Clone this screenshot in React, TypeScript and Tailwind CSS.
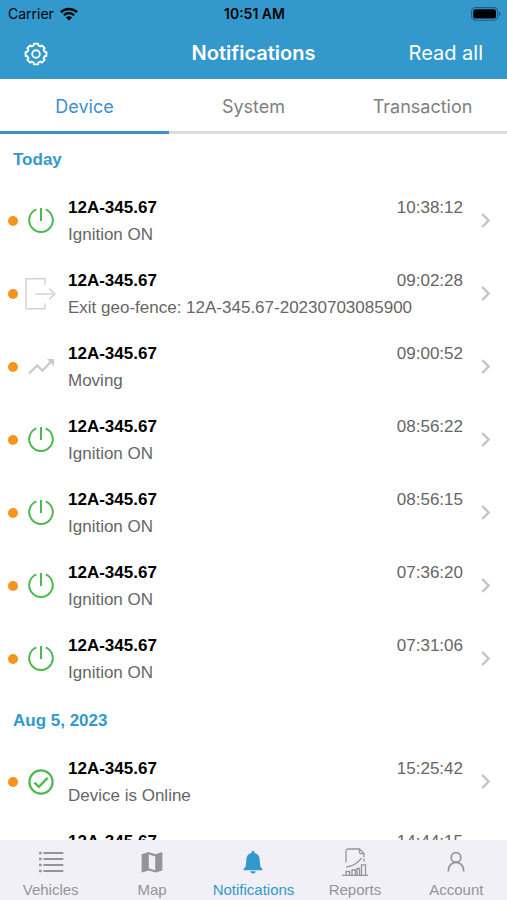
import * as React from "react";

type IconProps = { className?: string };

type NotificationKind = "ignition" | "exit" | "moving" | "online";

type NotificationItem = {
  id: number;
  kind: NotificationKind;
  plate: string;
  message: string;
  time: string;
};

const PLATE = "12A-345.67";

const groups: { label: string; items: NotificationItem[] }[] = [
  {
    label: "Today",
    items: [
      { id: 1, kind: "ignition", plate: PLATE, message: "Ignition ON", time: "10:38:12" },
      {
        id: 2,
        kind: "exit",
        plate: PLATE,
        message: "Exit geo-fence: 12A-345.67-20230703085900",
        time: "09:02:28",
      },
      { id: 3, kind: "moving", plate: PLATE, message: "Moving", time: "09:00:52" },
      { id: 4, kind: "ignition", plate: PLATE, message: "Ignition ON", time: "08:56:22" },
      { id: 5, kind: "ignition", plate: PLATE, message: "Ignition ON", time: "08:56:15" },
      { id: 6, kind: "ignition", plate: PLATE, message: "Ignition ON", time: "07:36:20" },
      { id: 7, kind: "ignition", plate: PLATE, message: "Ignition ON", time: "07:31:06" },
    ],
  },
  {
    label: "Aug 5, 2023",
    items: [
      { id: 8, kind: "online", plate: PLATE, message: "Device is Online", time: "15:25:42" },
      { id: 9, kind: "online", plate: PLATE, message: "Device is Online", time: "14:44:15" },
    ],
  },
];

/* Status bar icons */
const WifiIcon = ({ className }: IconProps) => (
  <svg className={className} viewBox="0 0 18 14" fill="none">
    <path d="M1 5.2a11.4 11.4 0 0 1 16 0" stroke="#000" strokeWidth="2.5" />
    <path d="M3.9 8.2a7.3 7.3 0 0 1 10.2 0" stroke="#000" strokeWidth="2.3" />
    <path d="M9 13.6 5.9 10.5a4.4 4.4 0 0 1 6.2 0z" fill="#000" />
  </svg>
);

const BatteryIcon = ({ className }: IconProps) => (
  <svg className={className} viewBox="0 0 30 14" fill="none">
    <rect x="0.6" y="0.6" width="26" height="12.6" rx="3.8" stroke="#1c5f85" strokeWidth="1.1" />
    <rect x="2.2" y="2.2" width="22.8" height="9.4" rx="2.2" fill="#000" />
    <path d="M28 4.8c1.9.7 1.9 3.5 0 4.2z" fill="#1c5f85" />
  </svg>
);

// Eight wide teeth with shallow notches between them
const GearIcon = ({ className }: IconProps) => (
  <svg
    className={className}
    viewBox="0 0 24 24"
    fill="none"
    stroke="#fff"
    strokeWidth="1.9"
    strokeLinejoin="round"
  >
    <path d="M22.4 14.1 20.500 14.300 19.600 16.400 20.700 17.900 17.900 20.700 16.400 19.600 14.300 20.500 14.100 22.400H9.900L9.700 20.500 7.600 19.600 6.100 20.700 3.300 17.900 4.400 16.400 3.500 14.300 1.600 14.100V9.900L3.500 9.700 4.400 7.600 3.300 6.100 6.100 3.300 7.600 4.400 9.700 3.500 9.900 1.600H14.100L14.300 3.500 16.400 4.400 17.900 3.300 20.700 6.100 19.600 7.600 20.500 9.700 22.400 9.900Z" />
    <circle cx="12" cy="12" r="3.8" />
  </svg>
);

/* Row icons */
const PowerIcon = ({ className }: IconProps) => (
  <svg className={className} viewBox="0 0 32 32" fill="none" stroke="#4db84f" strokeWidth="2">
    <path d="M11.3 4.3a11.8 11.8 0 1 0 9.400 0" />
    <path d="M16 3v13" />
  </svg>
);

const ExitIcon = ({ className }: IconProps) => (
  <svg className={className} viewBox="0 0 32 32" fill="none" stroke="#d2d2d2" strokeWidth="1.4">
    <path d="M20 7V.8H1v30h19v-5.600" />
    <path d="M10 16h19.400" />
    <path d="m24.2 10.600 5.600 5.400-5.600 5.400" />
  </svg>
);

const MovingIcon = ({ className }: IconProps) => (
  <svg className={className} viewBox="0 0 32 32" fill="none">
    <path d="m4 22.500 8.200-8 5.200 5 8.800-8.800" stroke="#cbcbcb" strokeWidth="2.4" />
    <path d="M21.800 8H29v7.200z" fill="#cbcbcb" />
  </svg>
);

const OnlineIcon = ({ className }: IconProps) => (
  <svg className={className} viewBox="0 0 32 32" fill="none" stroke="#4db84f" strokeWidth="2.2">
    <circle cx="16" cy="16" r="11.600" />
    <path d="m9.400 16.600 4.500 4.300 8.700-9" strokeWidth="2.3" />
  </svg>
);

const ChevronIcon = ({ className }: IconProps) => (
  <svg className={className} viewBox="0 0 10 16" fill="none">
    <path d="m1.2 1 6.400 6.500L1.200 14" stroke="#c4c4c4" strokeWidth="2.4" />
  </svg>
);

/* Bottom bar icons */
const ListIcon = ({ className }: IconProps) => (
  <svg className={className} viewBox="0 0 28 28" fill="currentColor">
    {[5, 11, 17, 23].map((y) => (
      <g key={y}>
        <rect x="2" y={y - 1.3} width="2.6" height="2.6" rx="0.6" />
        <rect x="6.4" y={y - 1} width="20" height="2" rx="0.5" />
      </g>
    ))}
  </svg>
);

const MapIcon = ({ className }: IconProps) => (
  <svg className={className} viewBox="0 0 28 28">
    <path
      fill="currentColor"
      fillRule="evenodd"
      d="M3.6 6.2 10.6 4l7 2.3L24.4 4v18.400l-6.800 2.200-7-2.200-7 2.200zM10.800 6.600v13.600l6.400 2V8.600z"
    />
  </svg>
);

const BellIcon = ({ className }: IconProps) => (
  <svg className={className} viewBox="0 0 28 28" fill="currentColor">
    <path d="M14 3c.9 0 1.500.7 1.500 1.600v.5c3.300.7 5 3.300 5.200 6.400l.5 6.500c.1 1.500 2.200 2 2.200 3.400v.8H4.600v-.8c0-1.400 2.100-1.900 2.200-3.400l.5-6.500c.2-3.100 1.900-5.700 5.200-6.400v-.5C12.500 3.700 13.100 3 14 3z" />
    <path d="M11.400 23.200h5.200a2.600 2.200 0 0 1-5.200 0z" />
  </svg>
);

const ReportIcon = ({ className }: IconProps) => (
  <svg className={className} viewBox="0 0 28 28" fill="none" stroke="currentColor" strokeWidth="1.3">
    <path d="M5 14.600V3.400Q5 1 7.400 1H18.500L23 5.400" />
    <path d="M18.500 1v3q0 1.600 1.600 1.600H23" />
    <path d="M23 5.400v8.400" strokeDasharray="3.500 1.500" />
    <path d="M5 19.200c6.500-.8 11.500-3.700 15.500-9" />
    <path d="M5 27v-3.500h3.600V27M11 27v-5h3.400v5M16 27v-6.500h2.500V27M20.500 27V16.800h4V27" />
    <path d="M1 27.300h26" />
  </svg>
);

const AccountIcon = ({ className }: IconProps) => (
  <svg className={className} viewBox="0 0 28 28" fill="none" stroke="currentColor" strokeWidth="1.7">
    <circle cx="14" cy="9.400" r="4.800" />
    <path d="M6.200 23.400c0-5.400 3.200-9 7.800-9s7.800 3.600 7.800 9" />
  </svg>
);

const kindIcons: Record<NotificationKind, React.FC<IconProps>> = {
  ignition: PowerIcon,
  exit: ExitIcon,
  moving: MovingIcon,
  online: OnlineIcon,
};

const tabs = ["Device", "System", "Transaction"];

const navItems: { label: string; icon: React.FC<IconProps> }[] = [
  { label: "Vehicles", icon: ListIcon },
  { label: "Map", icon: MapIcon },
  { label: "Notifications", icon: BellIcon },
  { label: "Reports", icon: ReportIcon },
  { label: "Account", icon: AccountIcon },
];

const NotificationRow: React.FC<{ item: NotificationItem; unread: boolean }> = ({
  item,
  unread,
}) => {
  const Icon = kindIcons[item.kind];

  return (
    <li>
      <button className="flex h-[73px] w-full items-center pl-2 pr-4 text-left text-[17px] leading-[27px]">
        <span
          className={`size-2.5 shrink-0 rounded-full ${unread ? "bg-[#f7941d]" : "bg-transparent"}`}
        />
        <Icon className="ml-[7px] size-8 shrink-0" />
        <span className="ml-[11px] min-w-0 flex-1">
          <span className="flex justify-between">
            <span className="font-bold text-black">{item.plate}</span>
            <span className="text-[#666]">{item.time}</span>
          </span>
          <span className="block truncate text-[#666]">{item.message}</span>
        </span>
        <ChevronIcon className="ml-[18px] h-4 w-2.5 shrink-0" />
      </button>
    </li>
  );
};

export default function App() {
  const [activeTab, setActiveTab] = React.useState("Device");
  const [activeNav, setActiveNav] = React.useState("Notifications");
  const [allRead, setAllRead] = React.useState(false);

  return (
    <div className="flex h-screen flex-col overflow-hidden bg-white font-['Liberation_Sans',sans-serif]">
      {/* Status bar + title */}
      <header className="shrink-0 bg-[#3399cd] font-['Inter',sans-serif]">
        <div className="grid h-7 grid-cols-3 items-center pl-2 pr-1.5 text-sm text-black">
          <div className="flex items-center gap-1.5">
            <span>Carrier</span>
            <WifiIcon className="h-3.5 w-[18px]" />
          </div>
          <span className="text-center font-semibold">10:51 AM</span>
          <BatteryIcon className="h-3.5 w-[30px] justify-self-end" />
        </div>
        <div className="grid h-[51px] grid-cols-3 items-center px-6 pb-0.5 text-xl text-white">
          <button aria-label="Settings" className="justify-self-start pt-0.5">
            <GearIcon className="size-6" />
          </button>
          <h1 className="text-center font-semibold">Notifications</h1>
          <button className="justify-self-end" onClick={() => setAllRead(true)}>
            Read all
          </button>
        </div>
      </header>

      {/* Tabs */}
      <div role="tablist" className="grid shrink-0 grid-cols-3 font-['Inter',sans-serif]">
        {tabs.map((tab) => (
          <button
            key={tab}
            role="tab"
            aria-selected={tab === activeTab}
            onClick={() => setActiveTab(tab)}
            className={`h-[55px] border-b-[3px] pt-1 text-lg ${
              tab === activeTab
                ? "border-[#3d8fd1] text-[#3d8fd1]"
                : "border-[#dcdcdc] text-[#808080]"
            }`}
          >
            {tab}
          </button>
        ))}
      </div>

      {/* Notification list */}
      <main className="min-h-0 flex-1 overflow-hidden">
        {groups.map((group) => (
          <section key={group.label}>
            <h2 className="flex h-[50px] items-center px-[13px] pt-0.5 text-[17px] font-bold text-[#3399cd]">
              {group.label}
            </h2>
            <ul>
              {group.items.map((item) => (
                <NotificationRow key={item.id} item={item} unread={!allRead} />
              ))}
            </ul>
          </section>
        ))}
      </main>

      {/* Bottom navigation */}
      <nav className="grid h-[60px] shrink-0 grid-cols-5 bg-[#f1f0f6]">
        {navItems.map(({ label, icon: Icon }) => (
          <button
            key={label}
            onClick={() => setActiveNav(label)}
            className={`flex flex-col items-center gap-1 pt-2 text-[15px] leading-5 ${
              label === activeNav ? "text-[#3399cd]" : "text-[#949499]"
            }`}
          >
            <Icon className="size-7" />
            <span>{label}</span>
          </button>
        ))}
      </nav>
    </div>
  );
}
